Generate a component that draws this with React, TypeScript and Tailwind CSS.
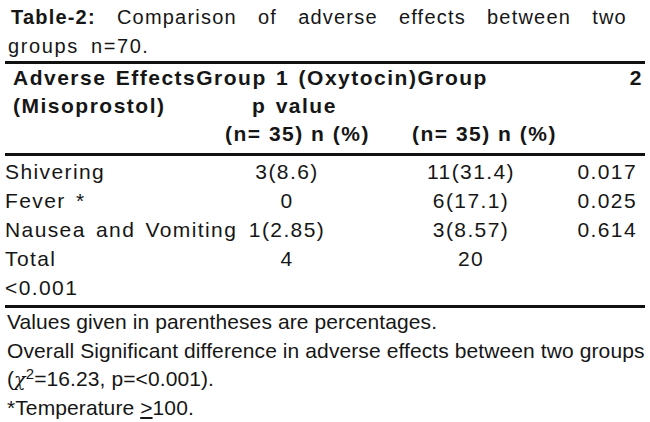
export default function App() {
  const rows = [
    { effect: "Shivering", g1: "3(8.6)", g2: "11(31.4)", p: "0.017" },
    { effect: "Fever *", g1: "0", g2: "6(17.1)", p: "0.025" },
    { effect: "Nausea and Vomiting", g1: "1(2.85)", g2: "3(8.57)", p: "0.614" },
    { effect: "Total", g1: "4", g2: "20", p: "" },
  ]

  return (
    <div className="w-[650px] h-[422px] bg-white text-[#161616] text-[21px] overflow-hidden font-['Liberation_Sans',Arial,sans-serif]">
      {/* Caption */}
      <div className="pt-[3px] leading-[29px] text-[20px]">
        <div className="flex justify-between w-[616px] ml-[11px] tracking-[1.2px]">
          <span className="font-bold">Table-2:</span>
          <span>Comparison</span>
          <span>of</span>
          <span>adverse</span>
          <span>effects</span>
          <span>between</span>
          <span>two</span>
        </div>
        <div className="pl-[8px] tracking-[1.6px] [word-spacing:5px]">groups n=70.</div>
      </div>

      <div className="h-[3px] bg-[#111] mx-[5px]" />

      {/* Header */}
      <div className="font-bold leading-[28px] tracking-[1.5px] [word-spacing:2px]">
        <div className="flex pl-[13px] pr-[7px] whitespace-nowrap">
          <span>Adverse Effects</span>
          <span>Group 1 (Oxytocin)Group</span>
          <span className="ml-auto">2</span>
        </div>
        <div className="flex pl-[13px]">
          <span className="w-[239px]">(Misoprostol)</span>
          <span>p value</span>
        </div>
        <div className="flex pl-[225px] [word-spacing:0px]">
          <span className="w-[187px] whitespace-nowrap">(n= 35) n (%)</span>
          <span className="whitespace-nowrap">(n= 35) n (%)</span>
        </div>
      </div>

      <div className="h-[3px] bg-[#111] mx-[5px] mt-[5px]" />

      {/* Body */}
      <div className="leading-[29px] tracking-[1.4px] [word-spacing:3px] pt-[1px]">
        {rows.map((r) => (
          <div key={r.effect} className="flex pl-[5px]">
            <span className="w-[200px] whitespace-nowrap">{r.effect}</span>
            <span className="w-[164px] text-center">{r.g1}</span>
            <span className="w-[156px] ml-[24px] text-center">{r.g2}</span>
            <span className="w-[88px] text-right">{r.p}</span>
          </div>
        ))}
        <div className="pl-[5px]">&lt;0.001</div>
      </div>

      <div className="h-[3px] bg-[#111] mx-[5px] mt-[3px]" />

      {/* Notes */}
      <div className="leading-[28.5px] tracking-[0.1px] pl-[7px] whitespace-nowrap">
        <div>Values given in parentheses are percentages.</div>
        <div>Overall Significant difference in adverse effects between two groups</div>
        <div>
          (<span className="italic font-['DejaVu_Serif',serif] text-[19px]">χ</span>
          <sup className="text-[15px]">2</sup>=16.23, p=&lt;0.001).
        </div>
        <div>
          *Temperature <span className="underline underline-offset-2">&gt;</span>100.
        </div>
      </div>
    </div>
  )
}
